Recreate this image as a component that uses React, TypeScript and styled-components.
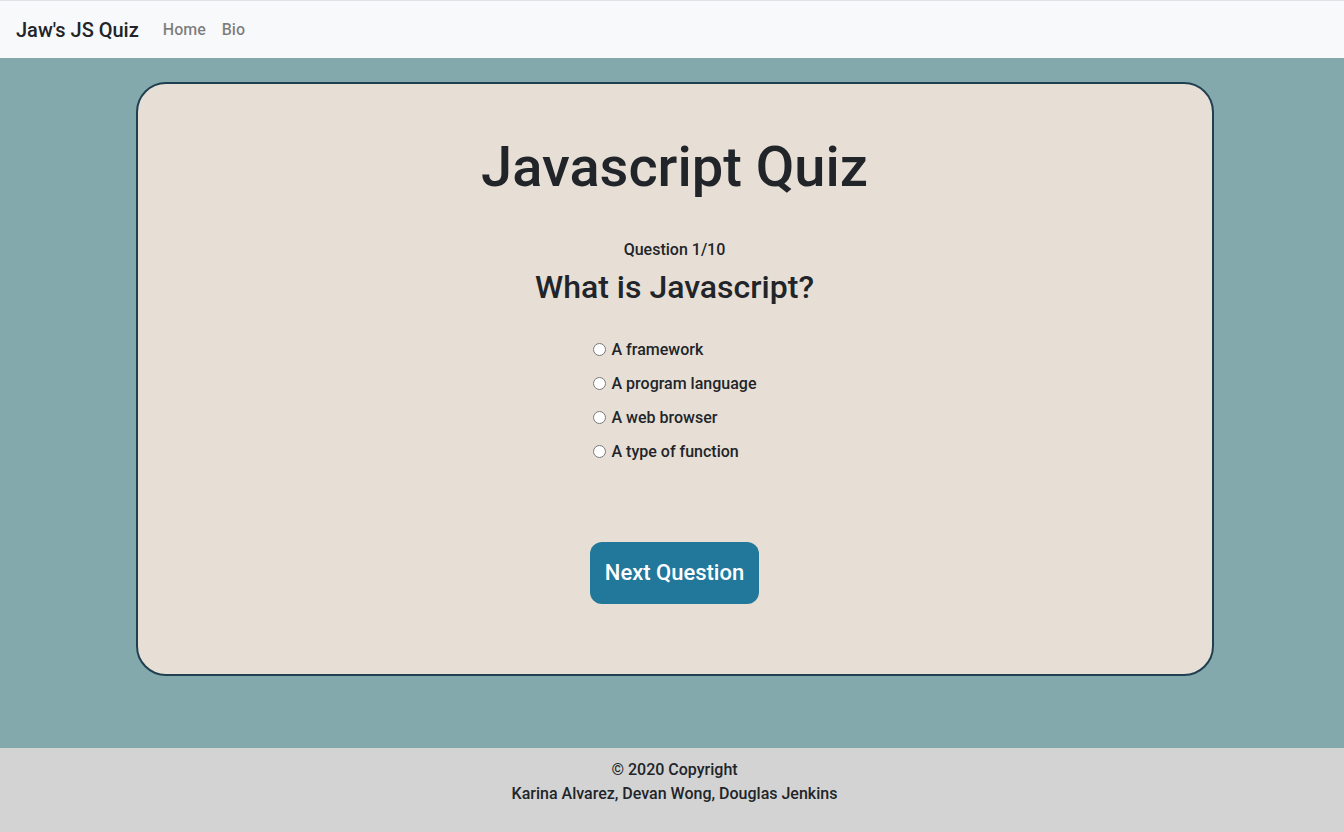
import React from "react";
import styled, { createGlobalStyle } from "styled-components";

const Global = createGlobalStyle`
  html, body { margin: 0; padding: 0; }
  body {
    font-family: Roboto, "Liberation Sans", sans-serif;
    font-weight: 500;
    color: #212529;
    background: #84a9ac;
  }
  * { box-sizing: border-box; }
`;

const Page = styled.div`
  min-height: 832px;
  display: flex;
  flex-direction: column;
`;

const Navbar = styled.nav`
  height: 58px;
  border-top: 1px solid #dee2e6;
  background: #f8f9fa;
  display: flex;
  align-items: center;
  padding: 0 16px;
`;

const Brand = styled.a`
  font-size: 20px;
  color: #212529;
  margin-right: 24px;
  text-decoration: none;
`;

const NavLink = styled.a`
  font-size: 16px;
  color: rgba(0, 0, 0, 0.5);
  margin-right: 16px;
  text-decoration: none;
`;

const Main = styled.main`
  flex: 1;
  padding: 24px 0 0 5px;
  display: flex;
  justify-content: center;
  align-items: flex-start;
`;

const Card = styled.section`
  width: 1078px;
  height: 594px;
  background: #e7dfd5;
  border: 2px solid #204051;
  border-radius: 30px;
  display: flex;
  flex-direction: column;
  align-items: center;
  padding-top: 50px;
`;

const Title = styled.h1`
  margin: 0;
  font-size: 56px;
  font-weight: 500;
  line-height: 1.2;
`;

const Counter = styled.div`
  margin-top: 37px;
  font-size: 16px;
  line-height: 24px;
`;

const Question = styled.h2`
  margin: 6px 0 0;
  font-size: 32px;
  font-weight: 500;
  line-height: 1.2;
`;

const Options = styled.div`
  margin-top: 31px;
  display: flex;
  flex-direction: column;
  gap: 10px;
`;

const Option = styled.label`
  display: flex;
  align-items: center;
  font-size: 16px;
  line-height: 24px;
`;

const Radio = styled.input`
  width: 13px;
  height: 13px;
  margin: 0 6px 0 0;
`;

const Button = styled.button`
  margin-top: 78px;
  background: #21789a;
  color: #fff;
  border: none;
  border-radius: 12px;
  height: 62px;
  padding: 0 15px;
  font-family: Roboto, "Liberation Sans", sans-serif;
  font-size: 22px;
  font-weight: 500;
`;

const Footer = styled.footer`
  height: 84px;
  background: #d3d3d3;
  display: flex;
  flex-direction: column;
  align-items: center;
  padding: 10px 0 0 5px;
  font-size: 16px;
  line-height: 24px;
`;

const options = ["A framework", "A program language", "A web browser", "A type of function"];

export default function App() {
  return (
    <Page>
      <Global />
      <Navbar>
        <Brand href="#">Jaw's JS Quiz</Brand>
        <NavLink href="#">Home</NavLink>
        <NavLink href="#">Bio</NavLink>
      </Navbar>
      <Main>
        <Card>
          <Title>Javascript Quiz</Title>
          <Counter>Question 1/10</Counter>
          <Question>What is Javascript?</Question>
          <Options>
            {options.map((o) => (
              <Option key={o}>
                <Radio type="radio" name="q" />
                {o}
              </Option>
            ))}
          </Options>
          <Button>Next Question</Button>
        </Card>
      </Main>
      <Footer>
        <div>© 2020 Copyright</div>
        <div>Karina Alvarez, Devan Wong, Douglas Jenkins</div>
      </Footer>
    </Page>
  );
}
